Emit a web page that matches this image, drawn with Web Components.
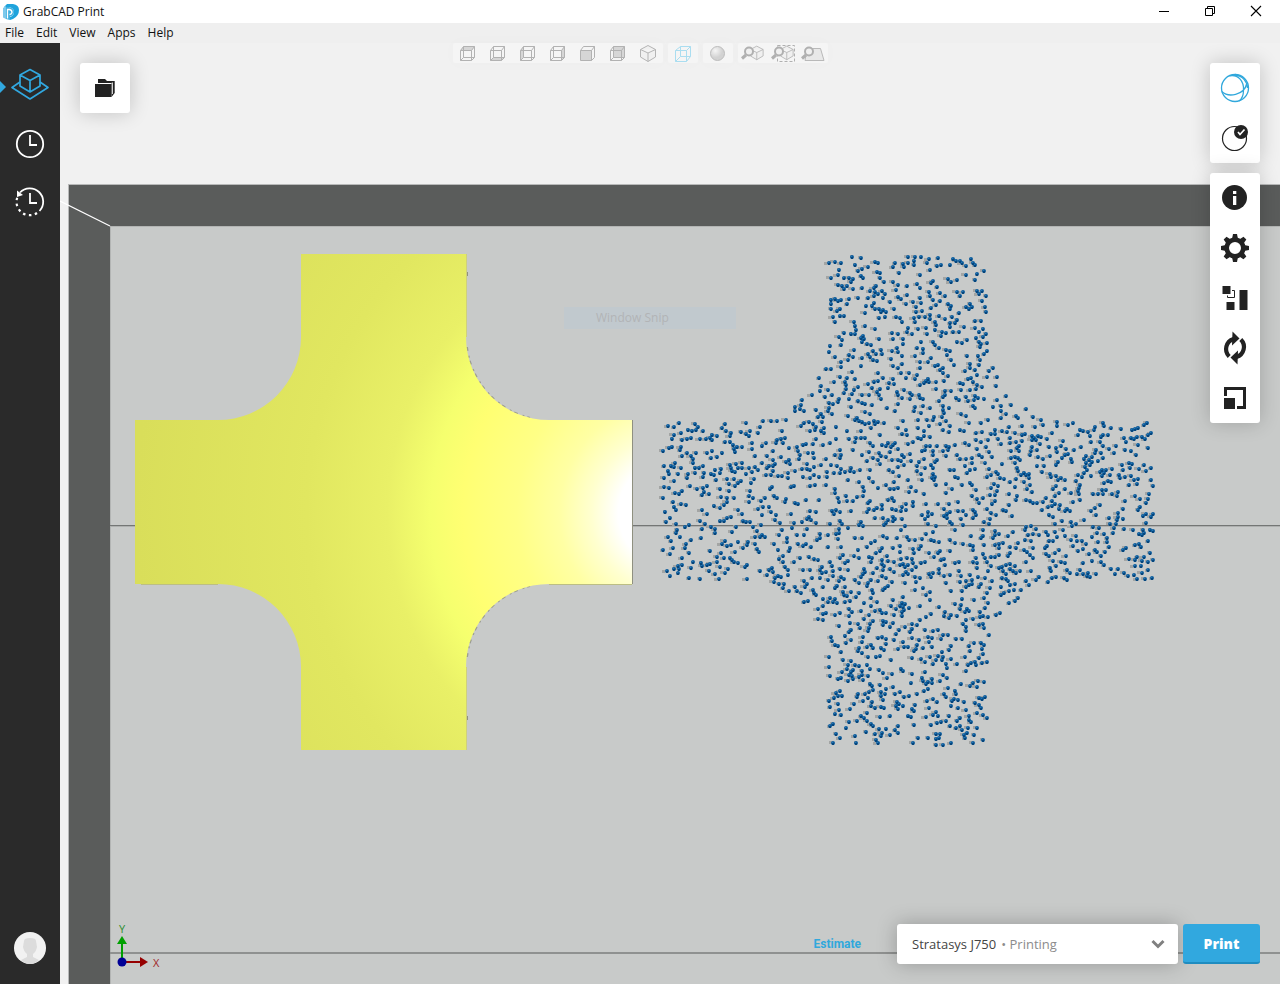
<!DOCTYPE html>
<html lang="en">
<head>
<meta charset="utf-8">
<meta name="viewport" content="width=device-width, initial-scale=1">
<title>GrabCAD Print</title>
<style>
html, body { margin: 0; height: 100%; }
body { font: 12px/20px "Open Sans", "Noto Sans", sans-serif; color: #111; }
</style>
</head>
<body>
<gp-app></gp-app>
<script>
const turnArrow = '<path d="M19.200 33.500A10.500 10.500 0 0 1 23.500 16" fill="none" stroke="#222" stroke-width="4.200"/><path d="M22.500 8.500 29.500 15.500 22 22.500Z" fill="#222"/>';
const ICONS = {
  logo: [16, 20, '<path d="M4 2H10Q16 3 16 8 16 14 10 17L7 18V15Q11 14 11 10 11 6 6 5L1 5Z" fill="#1fa3dc"/><path d="M0 6 3 4V17L0 15.500Z" fill="#7cc9ec"/><path d="M3 5H6Q11 6 11 10 11 14 7 14.500V18L3 17Z" fill="#3fb0e0"/><path d="M4.500 16.500V7.500H6.500Q9 8 9 10.500 8.500 12.500 6.500 12.500" fill="none" stroke="#fff" stroke-width="1.300"/>'],
  minimize: [12, 12, '<path d="M1 6.500H11" stroke="#000"/>'],
  restore: [12, 12, '<path d="M1.500 3.500H8.500V10.500H1.500ZM3.500 3.500V1.500H10.500V8.500H8.500" stroke="#000" fill="none"/>'],
  close: [12, 12, '<path d="M1 1 11 11M11 1 1 11" stroke="#000" fill="none" stroke-width="1.100"/>'],
  model: [60, 60, '<g fill="none" stroke="#31a8e0" stroke-width="1.700" stroke-linejoin="round"><path d="M30 15.500 40 21V32L30 38 20 32V21ZM20 21 30 26.500 40 21M30 26.500V38"/><path d="M20 28 12 33.500 30 45 48 33.500 40 28"/></g><path d="M0 27 6 33 0 39Z" fill="#31a8e0"/>'],
  schedule: [60, 60, '<circle cx="30" cy="30" r="13.200" fill="none" stroke="#fff" stroke-width="1.800"/><path d="M30 21V31H37" fill="none" stroke="#fff" stroke-width="1.800"/>'],
  history: [60, 60, '<g transform="translate(0 -1)"><path d="M20 19.500A13.200 13.200 0 1 1 39.500 38" fill="none" stroke="#fff" stroke-width="1.800"/><path d="M37 40A13.200 13.200 0 0 1 17.500 24" fill="none" stroke="#fff" stroke-width="2.200" stroke-dasharray="2.500 3.500"/><path d="M17 17.500V24L23 22Z" fill="#fff"/><path d="M30 20V30H37" fill="none" stroke="#fff" stroke-width="1.800"/></g>'],
  avatar: [32, 32, '<circle cx="16" cy="16" r="16" fill="#f2f2f2"/><path d="M10 9Q10 6 16 6 22 6 22 9L23 15Q22 20 19 22V25L25 28Q21 32 16 32 11 32 7 28L13 25V22Q10 20 9 15Z" fill="#dcdcdc"/>'],
  folder: [50, 50, '<path d="M18 19V16H25L27 18H34.700V30L31.500 34V20H18Z" fill="#222"/><path d="M32.300 19.500V31" stroke="#fff"/><path d="M15 21H31.500V34H15Z" fill="#222"/>'],
  sphere: [50, 50, '<g fill="none" stroke="#31a8dc" stroke-width="1.300"><circle cx="25" cy="25" r="13.500"/><path d="M19.500 12.800C28 11 34 18 33.500 27 33.500 32 32 36 29 38M25 11.500C33 13 37.500 19 37.500 25M11.800 28.500C18 34.500 34 33 37 20"/></g>'],
  verify: [50, 50, '<circle cx="24.500" cy="25.500" r="12" fill="none" stroke="#222" stroke-width="1.200"/><circle cx="31" cy="19" r="7" fill="#222"/><path d="M28 19 30 21.500 34.500 16.500" fill="none" stroke="#fff" stroke-width="1.700"/>'],
  info: [50, 50, '<circle cx="24.500" cy="24.500" r="12.500" fill="#222"/><path d="M23 18H26.300V21H23ZM23 23H26.300V32H23Z" fill="#fff"/>'],
  settings: [50, 50, '<circle cx="25" cy="25" r="8.300" fill="none" stroke="#222" stroke-width="4.600"/><g fill="#222">' + [0, 45, 90, 135, 180, 225, 270, 315].map(a => '<path d="M22 16 23 11H27L28 16Z" transform="rotate(' + a + ' 25 25)"/>').join('') + '</g>'],
  arrange: [50, 50, '<path d="M12.500 13H20.500V21H12.500ZM16.500 29H24.500V37H16.500ZM29.500 17H37.500V37H29.500Z" fill="#222"/><path d="M22 17.500H24.500V24.500H17.500V22.500" fill="none" stroke="#222"/>'],
  rotate: [50, 50, turnArrow + '<g transform="rotate(180 25 25)">' + turnArrow + '</g>'],
  scale: [50, 50, '<path d="M14 14H36V36H27V33H33V17H17V23H14ZM14 25H25V36H14Z" fill="#222"/>'],
  chevron: [14, 10, '<path d="M1.500 2 7 7.500 12.500 2" fill="none" stroke="#808080" stroke-width="3"/>']
};
const cubeFaces = {
  top: 'M7.500 7.500 10.500 3.500H21.500L18.500 7.500Z', bottom: 'M7.500 17.500 10.500 14.500H21.500L18.500 17.500Z',
  left: 'M7.500 7.500 10.500 3.500V14.500L7.500 17.500Z', right: 'M18.500 7.500 21.500 3.500V14.500L18.500 17.500Z',
  front: 'M7.500 7.500H18.500V17.500H7.500Z', back: 'M10.500 3.500H21.500V14.500H10.500Z'
};
for (const [face, d] of Object.entries(cubeFaces)) {
  const open = face === 'front' ? '' : 'M7.500 17.500 10.500 14.500H21.500M10.500 3.500V14.500';
  ICONS['view-' + face] = [30, 20, '<path d="' + d + '" fill="#d6d6d6"/><path fill="none" stroke="#b2b2b2" d="M7.500 7.500H18.500V17.500H7.500V7.500L10.500 3.500H21.500V14.500L18.500 17.500M18.500 7.500 21.500 3.500' + open + '"/>'];
}
const isoCube = '<path d="M7.500 6.500 15 2.500 22.500 6.500V14L15 18.500 7.500 14ZM7.500 6.500 15 10 22.500 6.500M15 10V18.500" fill="#f0f0f0" stroke="#b4b4b4"/>';
const lens = '<path d="M4 15.500 8 12" stroke="#b0b0b0" stroke-width="3"/><circle cx="11" cy="8.500" r="4" fill="#f0f0f0" stroke="#b0b0b0" stroke-width="2"/>';
ICONS['view-iso'] = [30, 20, isoCube];
ICONS.wireframe = [30, 20, '<g fill="none" stroke="#aaddf0"><path d="M7.500 7.500H18.500V18.500H7.500ZM7.500 7.500 12.500 3.500H22.500V13.500L18.500 18.500M18.500 7.500 22.500 3.500M7.500 18.500 12.500 13.500H22.500M12.500 3.500V13.500"/></g>'];
ICONS.shaded = [30, 20, '<defs><radialGradient id="s" cx="35%" cy="30%"><stop stop-color="#f5f5f5"/><stop offset="1" stop-color="#d2d2d2"/></radialGradient></defs><circle cx="14.500" cy="10.500" r="7" fill="url(#s)" stroke="#bdbdbd"/>'];
ICONS['zoom-model'] = [30, 20, '<g transform="translate(6 1) scale(.85)">' + isoCube + '</g>' + lens];
ICONS['zoom-area'] = [30, 20, '<g transform="translate(6 1) scale(.85)">' + isoCube + '</g><path d="M9.500 2.500H26.500V18.500H9.500Z" fill="none" stroke="#b0b0b0" stroke-dasharray="3 2"/>' + lens];
ICONS['zoom-bed'] = [30, 20, '<path d="M9 5.500H22.500L26 17.500H7Z" fill="#e8e8e8" stroke="#b9b9b9"/>' + lens];

function define(name, css, html, after) {
  const template = document.createElement('template');
  template.innerHTML = '<style>*{box-sizing:border-box}' + css + '</style>' + html;
  customElements.define(name, class extends HTMLElement {
    constructor() {
      super();
      this.attachShadow({ mode: 'open' }).append(template.content.cloneNode(true));
    }
    connectedCallback() { if (after) after(this, this.shadowRoot); }
  });
}

define('gp-icon', ':host{display:block;flex:none}svg{display:block}', '<span></span>', (host, root) => {
  const [w, h, body] = ICONS[host.getAttribute('name')];
  root.querySelector('span').innerHTML = '<svg aria-hidden="true" width="' + w + '" height="' + h + '" viewBox="0 0 ' + w + ' ' + h + '">' + body + '</svg>';
});

define('gp-icon-button',
  ':host{display:block}button{display:block;width:100%;margin:0;padding:0;border:0;background:none;cursor:pointer}gp-icon{margin:0 auto;width:fit-content}',
  '<button type="button"></button>', (host, root) => {
    const button = root.querySelector('button');
    const icon = document.createElement('gp-icon');
    icon.setAttribute('name', host.getAttribute('icon'));
    button.replaceChildren(icon);
    button.setAttribute('aria-label', host.getAttribute('label'));
  });

define('gp-title-bar',
  ':host{display:flex;align-items:center;height:23px;background:#fff;padding:0 18px 0 3px;gap:4px;font-size:12px;line-height:20px}h1{font:inherit;margin:0;flex:1}.window{display:flex;gap:34px;align-items:center;padding-bottom:2px}gp-icon-button{width:12px}',
  '<gp-icon name="logo"></gp-icon><h1>GrabCAD Print</h1><div class="window"><gp-icon-button icon="minimize" label="Minimize"></gp-icon-button><gp-icon-button icon="restore" label="Restore"></gp-icon-button><gp-icon-button icon="close" label="Close"></gp-icon-button></div>');

define('gp-menu-bar',
  ':host{display:block;background:#efefef;height:20px}nav{display:flex;gap:12px;padding:0 5px}button{font:12px/20px "Open Sans","Noto Sans",sans-serif;color:#111;border:0;padding:0;background:none}',
  '<nav aria-label="Menu"><button type="button">File</button><button type="button">Edit</button><button type="button">View</button><button type="button">Apps</button><button type="button">Help</button></nav>');

define('gp-sidebar',
  ':host{display:flex;flex-direction:column;justify-content:space-between;width:60px;background:#2a2a2a;padding:11px 0 20px}',
  '<nav aria-label="Sections"><gp-icon-button icon="model" label="Model"></gp-icon-button><gp-icon-button icon="schedule" label="Schedule"></gp-icon-button><gp-icon-button icon="history" label="History"></gp-icon-button></nav><gp-icon-button icon="avatar" label="Account"></gp-icon-button>');

define('gp-panel',
  ':host{display:block;width:50px;background:#fff;border-radius:3px;box-shadow:0 0 20px rgba(0,0,0,.2)}',
  '<slot></slot>');

define('gp-view-tools',
  ':host{display:flex;gap:5px}.group{display:flex;background:#f5f5f5;border-radius:2px;box-shadow:0 0 16px rgba(0,0,0,.02)}gp-icon-button{width:30px}',
  [['view-top', 'view-bottom', 'view-left', 'view-right', 'view-front', 'view-back', 'view-iso'], ['wireframe'], ['shaded'], ['zoom-model', 'zoom-area', 'zoom-bed']]
    .map(g => '<div class="group">' + g.map(i => '<gp-icon-button icon="' + i + '" label="' + i.replace('-', ' ') + '"></gp-icon-button>').join('') + '</div>').join(''));

define('gp-print-bar',
  ':host{display:flex;align-items:center;gap:5px}a{font:bold 12px/20px Roboto,"Open Sans",sans-serif;color:#31a8dc;text-decoration:none;margin-right:31px}' +
  'label{display:flex;align-items:center;width:281px;height:40px;background:#fff;border-radius:3px;padding:0 13px 0 15px;box-shadow:0 0 20px rgba(0,0,0,.25);font-size:13px;color:#8c8c8c}' +
  'select{appearance:none;field-sizing:content;border:0;padding:0;margin:0 5px 0 0;background:none;color:#444;font:13px/20px "Open Sans","Noto Sans",sans-serif}gp-icon{margin-left:auto}' +
  'button{width:77px;height:40px;border:0;border-bottom:2px solid #1f8cc0;border-radius:3px;background:#31a8df;color:#fff;font:800 14px/20px "Open Sans","Noto Sans",sans-serif;padding:2px 0 0}',
  '<a href="#estimate">Estimate</a><label><select aria-label="Printer"><option>Stratasys J750</option></select><span>• Printing</span><gp-icon name="chevron"></gp-icon></label><button type="button">Print</button>');

const CROSS = 'M301 254H466V337A83 83 0 0 0 549 420H632V584H549A83 83 0 0 0 466 667V750H301V667A83 83 0 0 0 218 584H135V420H218A83 83 0 0 0 301 337Z';
define('gp-scene',
  ':host{display:block;min-width:0;min-height:0;overflow:hidden;background:#f1f1f1}svg{display:block;width:100%;height:100%}text{font-family:"Open Sans","Noto Sans",sans-serif}',
  '<svg viewBox="60 43 1220 941" preserveAspectRatio="xMidYMid slice" role="img" aria-label="Build tray">' +
  '<defs><radialGradient id="glow" gradientUnits="userSpaceOnUse" cx="672" cy="513" r="537"><stop offset=".1" stop-color="#fff"/><stop offset=".15" stop-color="#ffffd0"/><stop offset=".21" stop-color="#ffffa4"/><stop offset=".29" stop-color="#ffff86"/><stop offset=".39" stop-color="#ffff72"/><stop offset=".45" stop-color="#f5ff6e"/><stop offset=".53" stop-color="#e9f067"/><stop offset=".68" stop-color="#e1e760"/><stop offset="1" stop-color="#d9de5a"/></radialGradient></defs>' +
  '<path d="M68 184H1280V984H68Z" fill="#b8b9b9"/><path d="M69 185H1280V984H69Z" fill="#5a5c5b"/><path d="M110 226H1280V984H110Z" fill="#b3b5b4"/><path d="M111 227H1280V984H111Z" fill="#c8cac9"/>' +
  '<path d="M60 201 110 226" stroke="#fff" stroke-width="1.200"/><path d="M110 525.500H1280" stroke="#747675"/><path d="M110 526.500H1280" stroke="#aeb0af"/><path d="M110 953H1280" stroke="#8f9190" stroke-width="2"/>' +
  '<path d="M632.500 420V584M467.500 272V276M467.500 716V720" fill="none" stroke="#8f9080"/><path d="M467 347A83 83 0 0 0 530 418M467 657A83 83 0 0 1 530 586" fill="none" stroke="#9c9d92" stroke-width="2" stroke-dasharray="4 5 2 3"/>' +
  '<path d="' + CROSS + '" fill="url(#glow)"/><path d="M141 584.500H218M549 584.500H632" stroke="#b9bb72" stroke-width=".8"/><path d="M466.500 254V337M466.500 667V750" stroke="#cfd17c"/>' +
  '<g class="dots"></g>' +
  '<path d="M564 307H736V329H564Z" fill="#c1c9ce"/><text x="596" y="322" font-size="12" fill="#b2b4b6">Window Snip</text>' +
  '<path d="M122 962V943" stroke="#00a000" stroke-width="2"/><path d="M122 936 127 944H117Z" fill="#00a000"/><path d="M122 962H141" stroke="#960000" stroke-width="2"/><path d="M148 962 140 957V967Z" fill="#960000"/><circle cx="122" cy="962" r="4.500" fill="#000096"/><text x="119" y="933" font-size="11" fill="#2c8c2c">Y</text><text x="153" y="967" font-size="11" fill="#a02828">X</text></svg>',
  (host, root) => {
    // Scatter the particles over the cross footprint with a fixed seed.
    let seed = 7421;
    const rnd = () => (seed = (seed * 16807) % 2147483647) / 2147483647;
    const inside = (x, y) => {
      const dx = Math.abs(x - 908), dy = Math.abs(y - 501);
      if (dx > 245 || dy > 244) return false;
      if (dx < 80 || dy < 79) return true;
      return dx < 163 && dy < 162 && Math.hypot(dx - 163, dy - 162) > 83;
    };
    const pts = [];
    while (pts.length < 2050) {
      const x = Math.round(663 + rnd() * 491), y = Math.round(257 + rnd() * 488);
      if (inside(x, y) && !pts.some(p => Math.abs(p[0] - x) + Math.abs(p[1] - y) < 4)) pts.push([x, y]);
    }
    let shade = '', ball = '', dark = '', shine = '';
    for (const [x, y] of pts) {
      shade += 'M' + (x - 2 - Math.round(rnd() * 3)) + ' ' + (y - 2 + Math.round(rnd())) + 'h3v3h-3z';
      ball += 'M' + (x - 2) + ' ' + y + 'a2 2 0 1 0 4 0a2 2 0 1 0 -4 0z';
      dark += 'M' + (x - 1) + ' ' + y + 'h2v2h-2z';
      shine += 'M' + (x - 1) + ' ' + (y - 1) + 'h1v1h-1z';
    }
    root.querySelector('.dots').innerHTML = '<path fill="#a3a5a4" d="' + shade + '"/><path fill="#0d5c9c" d="' + ball + '"/><path fill="#07467c" d="' + dark + '"/><path fill="#2277b5" d="' + shine + '"/>';
  });

define('gp-viewport',
  ':host{display:grid;min-width:0;min-height:0;grid-template:minmax(0,1fr)/minmax(0,1fr)}gp-scene,.overlay{grid-area:1/1}.overlay{z-index:1;display:grid;grid-template:auto auto 1fr auto/50px 1fr 50px;padding:0 20px 20px}' +
  'gp-view-tools{grid-area:1/1/2/4;justify-self:center;margin-right:60px}.files{grid-area:2/1}.tools{grid-area:2/3/4/4;display:flex;flex-direction:column;gap:10px}gp-print-bar{grid-area:4/1/5/4;justify-self:end}',
  '<gp-scene></gp-scene><div class="overlay"><gp-view-tools></gp-view-tools><gp-panel class="files"><gp-icon-button icon="folder" label="Open project"></gp-icon-button></gp-panel>' +
  '<div class="tools"><gp-panel><gp-icon-button icon="sphere" label="Model view"></gp-icon-button><gp-icon-button icon="verify" label="Check models"></gp-icon-button></gp-panel><gp-panel>' +
  ['info', 'settings', 'arrange', 'rotate', 'scale'].map(i => '<gp-icon-button icon="' + i + '" label="' + i + '"></gp-icon-button>').join('') + '</gp-panel></div><gp-print-bar></gp-print-bar></div>');

define('gp-app',
  ':host{display:grid;grid-template:auto auto minmax(0,1fr)/60px minmax(0,1fr);height:100vh}gp-title-bar,gp-menu-bar{grid-column:1/3}',
  '<gp-title-bar></gp-title-bar><gp-menu-bar></gp-menu-bar><gp-sidebar></gp-sidebar><gp-viewport></gp-viewport>');
</script>
</body>
</html>
